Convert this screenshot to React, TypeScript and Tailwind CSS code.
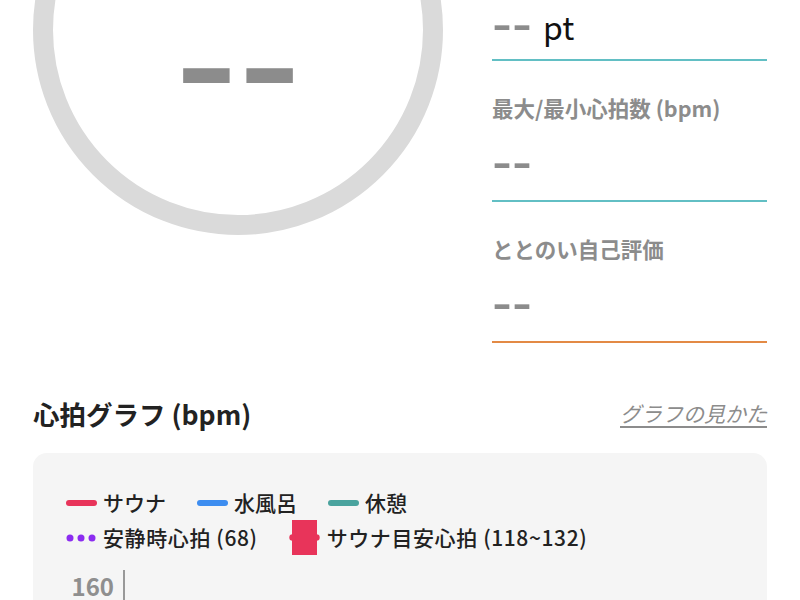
import React from 'react'

const jp = "font-['Noto_Sans_CJK_JP',sans-serif]"
const dashFont = "font-['Liberation_Sans',sans-serif]"

function SmallDash() {
  return (
    <span className={`${dashFont} block h-[20px] text-[60px] leading-[20px] text-[#8c8c8c] relative top-[-5px]`}>--</span>
  )
}

function Field({ label, line }: { label: string; line: string }) {
  return (
    <div className={`mt-[33px] pb-[14px] border-b-2 ${line}`}>
      <div className="h-[28px] text-[21.5px] leading-[28px] font-semibold text-[#8c8c8c]">{label}</div>
      <div className="mt-[24px] h-[40px] flex items-center">
        <SmallDash />
      </div>
    </div>
  )
}

function LineMark({ color }: { color: string }) {
  return <span className={`block w-[31px] h-[6px] rounded-full ${color}`} />
}

export default function App() {
  return (
    <div className={`w-[800px] h-[600px] overflow-hidden bg-white px-[33px] ${jp}`}>
      {/* Top: score ring + stats */}
      <div className="flex items-start gap-[49px]">
        <div className="w-[410px] h-[410px] mt-[-175px] shrink-0 rounded-full border-[20px] border-[#dadada] flex items-center justify-center pt-[60px]">
          <span className={`${dashFont} block h-[40px] text-[190px] leading-[40px] text-[#8c8c8c]`}>--</span>
        </div>

        <div className="flex-1 pt-[8px]">
          <div className="pb-[11px] border-b-2 border-[#62bfc4]">
            <div className="h-[40px] flex items-center gap-[11px]">
              <SmallDash />
              <span className="text-[32px] leading-none text-[#111] relative top-[-2px]">pt</span>
            </div>
          </div>
          <Field label="最大/最小心拍数 (bpm)" line="border-[#62bfc4]" />
          <Field label="ととのい自己評価" line="border-[#e38a45]" />
        </div>
      </div>

      {/* Heart rate graph */}
      <div className="mt-[53px] h-[36px] flex items-center justify-between">
        <h2 className="text-[26.5px] font-bold text-[#222]">心拍グラフ (bpm)</h2>
        <a className="text-[21px] text-[#8c8c8c] underline underline-offset-4 italic">グラフの見かた</a>
      </div>

      <div className="mt-[21px] h-[200px] rounded-[14px] bg-[#f5f5f5] px-[33px] pt-[32px]">
        <div className="h-[35px] flex items-center gap-[31px] text-[21px] font-medium text-[#222]">
          <div className="flex items-center gap-[6px]">
            <LineMark color="bg-[#e8345a]" />
            <span>サウナ</span>
          </div>
          <div className="flex items-center gap-[6px]">
            <LineMark color="bg-[#3d8df0]" />
            <span>水風呂</span>
          </div>
          <div className="flex items-center gap-[6px]">
            <LineMark color="bg-[#4aa39e]" />
            <span>休憩</span>
          </div>
        </div>
        <div className="h-[35px] flex items-center gap-[31px] text-[21px] font-medium text-[#222] tracking-[0.6px]">
          <div className="flex items-center gap-[7px]">
            <svg width="30" height="8" viewBox="0 0 30 8">
              <circle cx="4" cy="4" r="3.5" fill="#8b2cf0" />
              <circle cx="15" cy="4" r="3.5" fill="#8b2cf0" />
              <circle cx="26" cy="4" r="3.5" fill="#8b2cf0" />
            </svg>
            <span>安静時心拍 (68)</span>
          </div>
          <div className="flex items-center gap-[7px]">
            <svg width="31" height="35" viewBox="0 0 31 35">
              <rect x="3" y="0" width="25" height="35" fill="#e8345a" />
              <circle cx="3.5" cy="17.5" r="3.2" fill="#e8345a" />
              <circle cx="27.5" cy="17.5" r="3.2" fill="#e8345a" />
            </svg>
            <span>サウナ目安心拍 (118~132)</span>
          </div>
        </div>
        <div className="mt-[15px] flex h-[40px]">
          <span className="w-[48px] text-right text-[24px] leading-[32px] font-semibold text-[#8f8f8f]">160</span>
          <span className="ml-[9px] border-l-2 border-[#999]" />
        </div>
      </div>
    </div>
  )
}
